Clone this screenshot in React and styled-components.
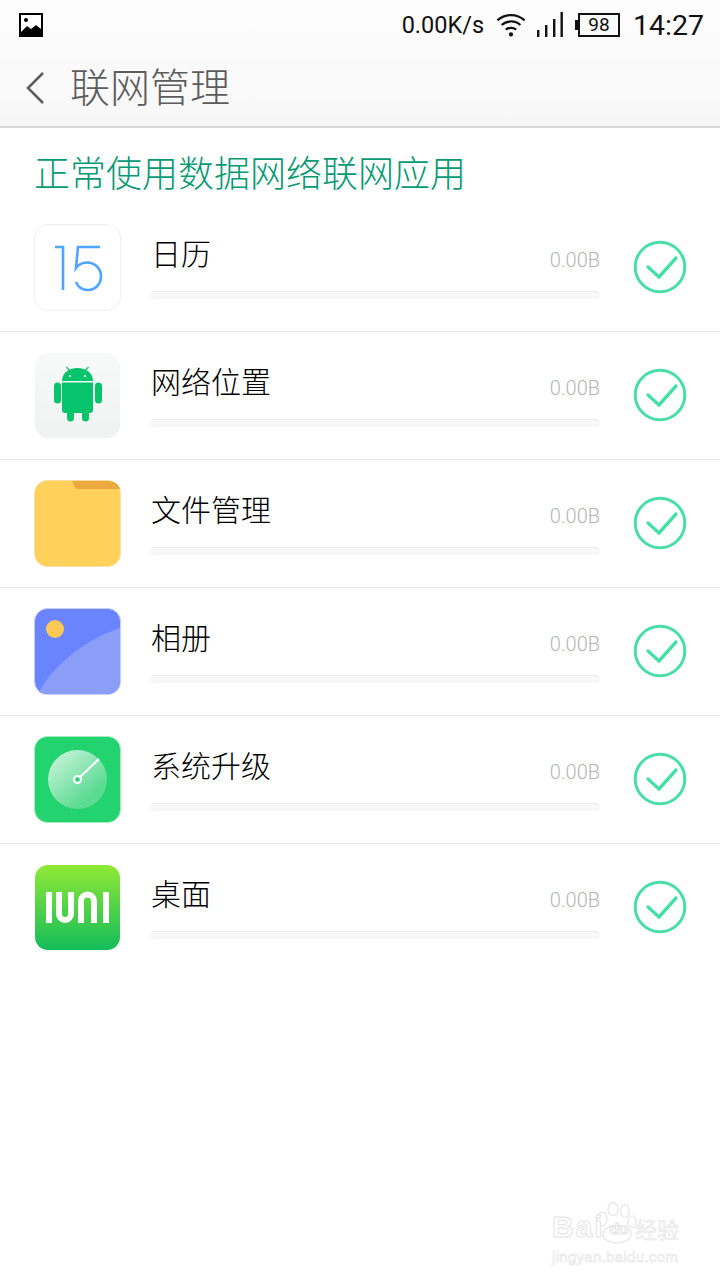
import React from 'react';
import styled, { createGlobalStyle } from 'styled-components';

const CJK = '"Noto Sans CJK SC", "Noto Sans", sans-serif';
const LATIN = 'Roboto, "Noto Sans", sans-serif';

const Global = createGlobalStyle`
  html, body {
    margin: 0;
    padding: 0;
    background: #fff;
  }
`;

const Page = styled.div`
  position: relative;
  width: 720px;
  height: 1280px;
  overflow: hidden;
  background: #fff;
  font-family: ${CJK};
  font-weight: 300;
`;

const Header = styled.header`
  height: 126px;
  background: linear-gradient(#fdfdfd, #f7f7f7);
  border-bottom: 2px solid #d9d9d9;
`;

const StatusBar = styled.div`
  display: flex;
  align-items: center;
  height: 50px;
  padding: 0 16px 0 19px;
  color: #111;
  font-family: ${LATIN};
  font-weight: 400;
`;

const StatusRight = styled.div`
  display: flex;
  align-items: center;
  margin-left: auto;
`;

const Speed = styled.span`
  font-size: 23.5px;
  margin-right: 12px;
`;

const Clock = styled.span`
  font-size: 28.5px;
  margin-left: 13px;
`;

const SignalIcon = styled.svg`
  margin-left: 11px;
`;

const BatteryWrap = styled.div`
  display: flex;
  align-items: center;
  margin-left: 12px;
`;

const BatteryCap = styled.div`
  width: 3px;
  height: 10px;
  background: #111;
`;

const BatteryBody = styled.div`
  width: 38px;
  height: 20px;
  border: 2px solid #111;
  font-size: 19px;
  line-height: 20px;
  text-align: center;
`;

const TitleBar = styled.div`
  display: flex;
  align-items: center;
  height: 76px;
  padding-left: 26px;
`;

const Title = styled.h1`
  margin: -6px 0 0 24px;
  font-size: 40px;
  font-weight: 300;
  line-height: 76px;
  color: #5c5c5c;
`;

const Heading = styled.h2`
  margin: 0;
  padding: 0 0 0 34px;
  height: 76px;
  font-size: 36px;
  font-weight: 300;
  line-height: 86px;
  color: #069a73;
`;

const List = styled.div`
  display: flex;
  flex-direction: column;
`;

const Row = styled.div`
  display: flex;
  align-items: flex-start;
  padding-top: 20px;
  height: 107px;
  border-bottom: 1px solid #e8e8e8;

  &:last-child {
    border-bottom: 0;
  }
`;

const IconBox = styled.div`
  flex: none;
  width: 87px;
  height: 87px;
  margin-left: 34px;

  svg {
    display: block;
  }
`;

const Info = styled.div`
  width: 450px;
  margin-left: 29px;
  position: relative;
`;

const Name = styled.div`
  height: 67px;
  margin-left: 1px;
  font-size: 30px;
  line-height: 56px;
  color: #000;
`;

const Size = styled.span`
  position: absolute;
  right: 0;
  top: 22px;
  font-family: ${LATIN};
  font-size: 20px;
  font-weight: 300;
  line-height: 28px;
  color: #b4b4b4;
`;

const Track = styled.div`
  height: 6px;
  border-top: 1px solid #ececec;
  border-bottom: 1px solid #f6f6f6;
  border-radius: 4px;
  background: #f8f8f8;
`;

const Check = styled.svg`
  flex: none;
  margin: 16px 0 0 33px;
`;

const Watermark = styled.div`
  position: absolute;
  left: 552px;
  top: 1200px;
  width: 150px;
  color: #fff;
  font-family: "Liberation Sans", sans-serif;
  font-weight: 400;
  -webkit-text-stroke: 1px #e4e4e4;
`;

const MarkTop = styled.div`
  position: relative;
  display: flex;
  align-items: flex-end;
  height: 44px;
  font-size: 30px;
  font-weight: 700;
  letter-spacing: 2px;
  line-height: 34px;
`;

const MarkDu = styled.span`
  font-size: 15px;
  line-height: 30px;
  letter-spacing: 0;
  margin: 0 7px 0 5px;
`;

const MarkCn = styled.span`
  font-family: ${CJK};
  font-size: 22px;
  font-weight: 400;
  letter-spacing: 0;
  line-height: 32px;
  -webkit-text-stroke: 0.6px #e8e8e8;
  color: #f4f4f4;
`;

const MarkSite = styled.div`
  margin-top: 3px;
  font-size: 15px;
  letter-spacing: 0.3px;
  line-height: 20px;
  white-space: nowrap;
  -webkit-text-stroke: 0.6px #e4e4e4;
`;

const Paw = styled.svg`
  position: absolute;
  left: 43px;
  top: 2px;
`;

const CalendarIcon = () => (
  <svg width="87" height="87" viewBox="0 0 87 87">
    <rect x="0.5" y="0.5" width="86" height="86" rx="13.5" fill="#fff" stroke="#eeeeee" />
    <g fill="none" stroke="#4ea5ff" strokeWidth="2.6">
      <path d="M21 23H29V66" />
      <path d="M66 23H44L42 44C45 40 49 38.500 53 38.500C61.500 38.500 67 45 67 52.500C67 60.500 61 66 54 66C48.500 66 44 63 42 58" />
    </g>
  </svg>
);

const AndroidIcon = () => (
  <svg width="87" height="87" viewBox="0 0 87 87">
    <defs>
      <linearGradient id="androidBg" x1="0" y1="0" x2="0" y2="1">
        <stop offset="0" stopColor="#f8f9f9" />
        <stop offset="1" stopColor="#f0f2f2" />
      </linearGradient>
    </defs>
    <rect x="1" y="1" width="85" height="85" rx="13" fill="url(#androidBg)" />
    <g fill="#06c46c">
      <path d="M28 29C28 21 35 16 43.500 16C52 16 59 21 59 29Z" />
      <path d="M28 30.500H59V58C59 60 58 61 56 61H31C29 61 28 60 28 58Z" />
      <rect x="20" y="30.500" width="7" height="21" rx="3.500" />
      <rect x="61" y="30.500" width="7" height="21" rx="3.500" />
      <rect x="33" y="56" width="7" height="13.500" rx="3.500" />
      <rect x="48" y="56" width="7" height="13.500" rx="3.500" />
    </g>
    <path d="M36 19L32.500 15M51 19L54.500 15" stroke="#06c46c" strokeWidth="1.200" />
    <circle cx="36" cy="24" r="1.100" fill="#f3f5f5" />
    <circle cx="51" cy="24" r="1.100" fill="#f3f5f5" />
  </svg>
);

const FolderIcon = () => (
  <svg width="87" height="87" viewBox="0 0 87 87">
    <rect x="0.5" y="0.5" width="86" height="86" rx="13" fill="#ffd05a" stroke="#f8dfa2" />
    <path d="M38 1H74C81 1 85 5 86 9H45C42 9 41 8 40 5Z" fill="#eda93f" />
  </svg>
);

const GalleryIcon = () => (
  <svg width="87" height="87" viewBox="0 0 87 87">
    <rect x="0.5" y="0.5" width="86" height="86" rx="13" fill="#6a84fd" stroke="#c6d0fb" />
    <path d="M5 84C20 57 50 32 86 20V73C86 81 81 86 73 86H13C10 86 7 85 5 84Z" fill="#8a9ef8" />
    <circle cx="21" cy="21" r="9" fill="#fdc956" />
  </svg>
);

const UpdateIcon = () => (
  <svg width="87" height="87" viewBox="0 0 87 87">
    <defs>
      <linearGradient id="dial" x1="0.15" y1="0.05" x2="0.75" y2="0.75">
        <stop offset="0" stopColor="#c5f3d8" />
        <stop offset="1" stopColor="#5cdb93" />
      </linearGradient>
    </defs>
    <rect x="0.5" y="0.5" width="86" height="86" rx="13" fill="#23d36f" stroke="#a5eac2" />
    <circle cx="43.500" cy="43.500" r="29.500" fill="url(#dial)" />
    <path d="M46 41L65 23" stroke="#fff" strokeWidth="2" />
    <circle cx="43.500" cy="43.500" r="3.400" fill="#23d36f" stroke="#fff" strokeWidth="2.200" />
  </svg>
);

const IuniIcon = () => (
  <svg width="87" height="87" viewBox="0 0 87 87">
    <defs>
      <linearGradient id="iuniBg" x1="0" y1="0" x2="0" y2="1">
        <stop offset="0" stopColor="#90e835" />
        <stop offset="1" stopColor="#13bd5a" />
      </linearGradient>
    </defs>
    <rect x="1" y="1" width="85" height="85" rx="13" fill="url(#iuniBg)" />
    <g fill="none" stroke="#fff" strokeWidth="6">
      <path d="M15 28V59" />
      <path d="M25 28V50A6 6 0 0 0 37 50V28" />
      <path d="M47 59V37A6.500 6.500 0 0 1 60 37V59" />
      <path d="M72 28V59" />
    </g>
  </svg>
);

const CheckIcon = () => (
  <Check width="54" height="54" viewBox="0 0 54 54">
    <circle cx="27" cy="27" r="24.800" fill="none" stroke="#47dfa5" strokeWidth="3" />
    <path d="M15 27L26 37L43 18" fill="none" stroke="#47dfa5" strokeWidth="3.400" strokeLinecap="round" strokeLinejoin="round" />
  </Check>
);

const apps = [
  { name: '日历', icon: CalendarIcon },
  { name: '网络位置', icon: AndroidIcon },
  { name: '文件管理', icon: FolderIcon },
  { name: '相册', icon: GalleryIcon },
  { name: '系统升级', icon: UpdateIcon },
  { name: '桌面', icon: IuniIcon },
];

export default function App() {
  return (
    <Page>
      <Global />
      <Header>
        <StatusBar>
          <svg width="24" height="24" viewBox="0 0 24 24">
            <rect width="24" height="24" fill="#000" />
            <rect x="2" y="2" width="20" height="20" fill="#fff" />
            <circle cx="7" cy="7" r="2" fill="#000" />
            <path d="M2 19L8 13L12 16L17 12L22 16V22H2Z" fill="#000" />
          </svg>
          <StatusRight>
            <Speed>0.00K/s</Speed>
            <svg width="30" height="28" viewBox="0 0 32 28" fill="none" stroke="#111" strokeWidth="2.400">
              <path d="M1.500 9C9.500 1.500 22.500 1.500 30.500 9" />
              <path d="M6 14C11.500 9 20.500 9 26 14" />
              <path d="M10.500 19C13.500 16.500 18.500 16.500 21.500 19" />
              <circle cx="16" cy="24" r="2.200" fill="#111" stroke="none" />
            </svg>
            <SignalIcon width="26" height="26" viewBox="0 0 26 26" fill="#111">
              <rect x="0" y="18" width="2.400" height="7" />
              <rect x="8" y="13" width="2.400" height="12" />
              <rect x="16" y="7" width="2.400" height="18" />
              <rect x="23.500" y="0" width="2.400" height="25" />
            </SignalIcon>
            <BatteryWrap>
              <BatteryCap />
              <BatteryBody>98</BatteryBody>
            </BatteryWrap>
            <Clock>14:27</Clock>
          </StatusRight>
        </StatusBar>
        <TitleBar>
          <svg width="20" height="34" viewBox="0 0 20 34" fill="none" stroke="#5c5c5c" strokeWidth="2.500">
            <path d="M17 2L2 17L17 32" />
          </svg>
          <Title>联网管理</Title>
        </TitleBar>
      </Header>
      <Heading>正常使用数据网络联网应用</Heading>
      <List>
        {apps.map(({ name, icon: Icon }) => (
          <Row key={name}>
            <IconBox>
              <Icon />
            </IconBox>
            <Info>
              <Name>{name}</Name>
              <Size>0.00B</Size>
              <Track />
            </Info>
            <CheckIcon />
          </Row>
        ))}
      </List>
      <Watermark>
        <Paw width="44" height="42" viewBox="0 0 44 42" fill="#fff" stroke="#e4e4e4" strokeWidth="1.200">
          <ellipse cx="7" cy="17" rx="5" ry="7" />
          <ellipse cx="18" cy="7" rx="5" ry="6.500" />
          <ellipse cx="30" cy="9" rx="4.500" ry="6.500" />
          <ellipse cx="37" cy="20" rx="4" ry="6" />
          <ellipse cx="22" cy="32" rx="14" ry="9" />
        </Paw>
        <MarkTop>
          Bai<MarkDu>du</MarkDu>
          <MarkCn>经验</MarkCn>
        </MarkTop>
        <MarkSite>jingyan.baidu.com</MarkSite>
      </Watermark>
    </Page>
  );
}
